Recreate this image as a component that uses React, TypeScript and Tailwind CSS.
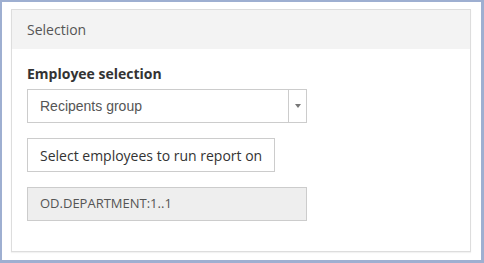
export default function App() {
  return (
    <div
      className="w-[484px] h-[263px] bg-white border-t-2 border-l-2 border-r-[3px] border-b-[3px] border-[#9eafd1] pl-[9px] pt-[7px]"
      style={{ fontFamily: '"Open Sans", sans-serif' }}
    >
      <div className="w-[460px] h-[243px] border border-[#dddddd] bg-white shadow-[0_1px_1px_rgba(0,0,0,0.05)]">
        {/* Header */}
        <div className="h-[39px] flex items-center px-[15px] bg-[#f3f3f3] text-[14px] leading-[20px] text-[#555]">
          Selection
        </div>

        {/* Body */}
        <div className="px-[15px] pt-[15px]">
          <div className="text-[14px] leading-[20px] font-bold text-[#333]">Employee selection</div>

          <div className="mt-[5px] w-[280px] h-[34px] flex border border-[#cccccc] bg-white">
            <div
              className="flex-1 flex items-center pl-[12px] text-[14px] text-[#555]"
              style={{ fontFamily: '"Liberation Sans", Arial, sans-serif' }}
            >
              Recipents group
            </div>
            <div className="w-[18px] border-l border-[#cccccc] flex items-center justify-center">
              <svg width="6" height="4" viewBox="0 0 6 4">
                <path d="M0 0 L6 0 L3 4 Z" fill="#777" />
              </svg>
            </div>
          </div>

          <button className="mt-[15px] h-[34px] px-[12px] border border-[#cccccc] bg-white text-[14px] text-[#333] flex items-center">
            Select employees to run report on
          </button>

          <div className="mt-[15px] w-[280px] h-[34px] flex items-center px-[12px] border border-[#cccccc] bg-[#eeeeee] text-[13px] text-[#555]">
            OD.DEPARTMENT:1..1
          </div>
        </div>
      </div>
    </div>
  );
}
